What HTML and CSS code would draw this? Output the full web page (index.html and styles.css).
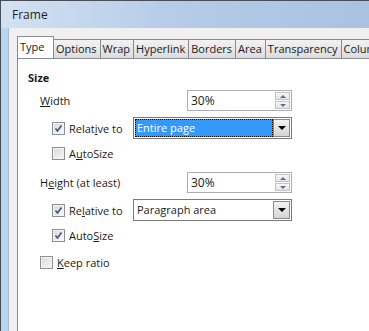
FILE: index.html
```html
<!DOCTYPE html>
<html lang="en">
<head>
    <meta charset="UTF-8">
    <meta name="viewport" content="width=device-width, initial-scale=1.0">
    <title>Frame</title>
    <link rel="stylesheet" href="styles.css">
</head>
<body>
    <div class="window">
        <div class="titlebar">Frame</div>
        <div class="frame">
            <div class="client">
                <div class="tabs">
                    <div class="tab active">Type</div>
                    <div class="tab">Options</div>
                    <div class="tab">Wrap</div>
                    <div class="tab">Hyperlink</div>
                    <div class="tab">Borders</div>
                    <div class="tab">Area</div>
                    <div class="tab">Transparency</div>
                    <div class="tab">Columns</div>
                </div>
                <div class="panel">
                    <div class="heading">Size</div>

                    <!-- Width -->
                    <div class="row field-row">
                        <div class="label"><u>W</u>idth</div>
                        <div class="spin">
                            <span class="spin-value">30%</span>
                            <div class="spin-buttons">
                                <div class="spin-btn"><span class="arrow-up"></span></div>
                                <div class="spin-btn"><span class="arrow-down"></span></div>
                            </div>
                        </div>
                    </div>
                    <div class="row combo-row sub">
                        <div class="check-label">
                            <span class="checkbox checked"><svg width="9" height="9" viewBox="0 0 9 9"><path d="M1.5 4.5 L3.5 7 L7.5 1.5" fill="none" stroke="#3b5389" stroke-width="1.6"/></svg></span>
                            <span>Relat<u>i</u>ve to</span>
                        </div>
                        <div class="combo selected">
                            <div class="combo-text">Entire page</div>
                            <div class="combo-btn"><span class="arrow-black"></span></div>
                        </div>
                    </div>
                    <div class="row check-row sub">
                        <span class="checkbox"></span>
                        <span>A<u>u</u>toSize</span>
                    </div>

                    <!-- Height -->
                    <div class="row field-row group">
                        <div class="label">H<u>e</u>ight (at least)</div>
                        <div class="spin">
                            <span class="spin-value">30%</span>
                            <div class="spin-buttons">
                                <div class="spin-btn"><span class="arrow-up"></span></div>
                                <div class="spin-btn"><span class="arrow-down"></span></div>
                            </div>
                        </div>
                    </div>
                    <div class="row combo-row sub">
                        <div class="check-label">
                            <span class="checkbox checked"><svg width="9" height="9" viewBox="0 0 9 9"><path d="M1.5 4.5 L3.5 7 L7.5 1.5" fill="none" stroke="#3b5389" stroke-width="1.6"/></svg></span>
                            <span>Re<u>l</u>ative to</span>
                        </div>
                        <div class="combo">
                            <div class="combo-text">Paragraph area</div>
                            <div class="combo-btn"><span class="arrow-black"></span></div>
                        </div>
                    </div>
                    <div class="row check-row sub">
                        <span class="checkbox checked"><svg width="9" height="9" viewBox="0 0 9 9"><path d="M1.5 4.5 L3.5 7 L7.5 1.5" fill="none" stroke="#3b5389" stroke-width="1.6"/></svg></span>
                        <span>Auto<u>S</u>ize</span>
                    </div>

                    <div class="row check-row keep">
                        <span class="checkbox"></span>
                        <span><u>K</u>eep ratio</span>
                    </div>
                </div>
            </div>
        </div>
    </div>
</body>
</html>
```

FILE: styles.css
```css
* {
    box-sizing: border-box;
    margin: 0;
    padding: 0;
}

body {
    font-family: "Open Sans", "Noto Sans", sans-serif;
    font-size: 11px;
    color: #1a1a1a;
    width: 369px;
    height: 331px;
    overflow: hidden;
}

.window {
    display: flex;
    flex-direction: column;
    height: 331px;
    border-top: 1px solid #4a4f57;
    border-left: 1px solid #4a4f57;
    background-color: #bcd5ee;
}

.titlebar {
    height: 27px;
    padding-left: 11px;
    display: flex;
    align-items: center;
    background: linear-gradient(90deg, #d3e2f3 0%, #b6cce7 45%, #a9c2e2 100%);
    color: #1e1e1e;
    font-size: 12px;
    flex-shrink: 0;
}

.frame {
    flex-grow: 1;
    display: flex;
    padding-left: 7px;
    background-color: #bcd5ee;
}

.client {
    flex-grow: 1;
    display: flex;
    flex-direction: column;
    background-color: #f0f0f0;
    padding: 8px 0 0 8px;
    border-left: 1px solid #a9bcd3;
}

.tabs {
    display: flex;
    align-items: flex-end;
    height: 22px;
    white-space: nowrap;
    overflow: hidden;
}

.tab {
    height: 19px;
    padding: 0 3px 0 2px;
    border: 1px solid #898c95;
    border-bottom: none;
    margin-right: -1px;
    background: linear-gradient(#f2f2f2, #dcdcdc);
    line-height: 17px;
    flex-shrink: 0;
}

.tab.active {
    width: 37px;
    height: 23px;
    margin-bottom: -1px;
    padding: 0 0 0 2px;
    background: #fff;
    position: relative;
    z-index: 1;
    line-height: 20px;
}

.panel {
    flex-grow: 1;
    background-color: #fff;
    border-top: 1px solid #898c95;
    border-left: 1px solid #898c95;
    padding: 9px 0 0 10px;
}

.heading {
    font-weight: bold;
    height: 19px;
    line-height: 19px;
}

.row {
    display: flex;
    align-items: center;
    white-space: nowrap;
}

.field-row {
    height: 23px;
    margin-top: 2px;
    padding-left: 12px;
}

.field-row.group {
    margin-top: 9px;
}

.label {
    width: 147px;
}

.sub {
    padding-left: 24px;
}

.combo-row {
    height: 24px;
    margin-top: 4px;
}

.check-row {
    height: 18px;
    margin-top: 4px;
    gap: 4px;
}

.check-row.keep {
    margin-top: 9px;
    padding-left: 12px;
}

.check-label {
    display: flex;
    align-items: center;
    gap: 4px;
    width: 81px;
}

.checkbox {
    width: 13px;
    height: 13px;
    border: 1px solid #8e8f8f;
    background: linear-gradient(135deg, #d9d9d9, #f8f8f8);
    box-shadow: inset 0 0 0 1px #f4f4f4;
    display: flex;
    align-items: center;
    justify-content: center;
    flex-shrink: 0;
}

.spin {
    width: 105px;
    height: 21px;
    border: 1px solid #abadb3;
    display: flex;
    align-items: center;
    justify-content: space-between;
    padding: 1px;
    background: #fff;
}

.spin-value {
    padding-left: 2px;
    font-size: 12px;
}

.spin-buttons {
    display: flex;
    flex-direction: column;
    gap: 1px;
    width: 15px;
    height: 17px;
}

.spin-btn {
    height: 8px;
    border: 1px solid #c3c3c3;
    background: linear-gradient(#f6f6f6, #e4e4e4);
    display: flex;
    align-items: center;
    justify-content: center;
}

.arrow-up {
    border-left: 3px solid transparent;
    border-right: 3px solid transparent;
    border-bottom: 3px solid #5c6e95;
}

.arrow-down {
    border-left: 3px solid transparent;
    border-right: 3px solid transparent;
    border-top: 3px solid #5c6e95;
}

.combo {
    width: 159px;
    height: 22px;
    border: 1px solid #7a7a7a;
    display: flex;
    padding: 1px;
    background: #fff;
}

.combo-text {
    flex-grow: 1;
    padding-left: 2px;
    line-height: 17px;
}

.combo.selected .combo-text {
    background-color: #3399ff;
    color: #fff;
    outline: 1px dotted #000;
    outline-offset: -1px;
}

.combo-btn {
    width: 17px;
    border: 1px solid #8b8b8b;
    background: linear-gradient(#f3f3f3, #d4d4d4);
    display: flex;
    align-items: center;
    justify-content: center;
}

.arrow-black {
    border-left: 4px solid transparent;
    border-right: 4px solid transparent;
    border-top: 4px solid #000;
}
```
